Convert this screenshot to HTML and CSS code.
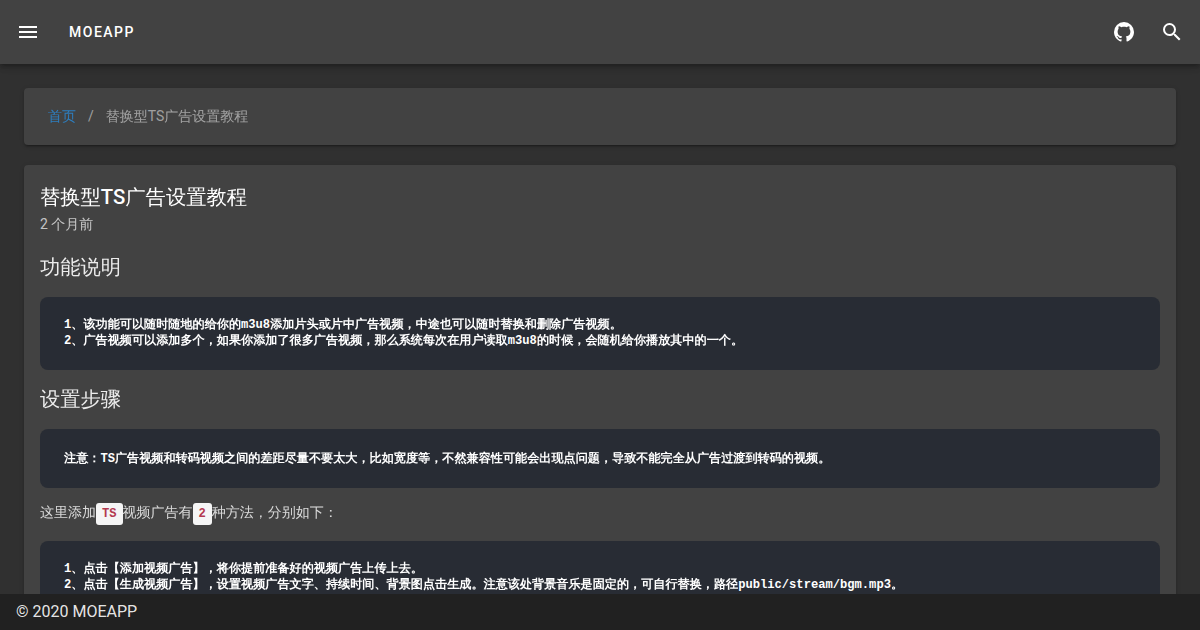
FILE: index.html
```html
<!DOCTYPE html>
<html lang="en">
  <head>
    <meta charset="utf-8" />
    <title>替换型TS广告设置教程 - MOEAPP</title>
    <link rel="stylesheet" href="styles.css">
  </head>

  <body>
    <div class="app">
      <header class="toolbar">
        <button class="icon-btn" aria-label="menu">
          <svg viewBox="0 0 24 24" width="24" height="24"><path d="M3 18h18v-2H3v2zm0-5h18v-2H3v2zm0-7v2h18V6H3z"/></svg>
        </button>
        <div class="toolbar-title">MOEAPP</div>
        <div class="spacer"></div>
        <button class="icon-btn" aria-label="github">
          <svg viewBox="0 0 24 24" width="24" height="24"><path d="M12 2A10 10 0 0 0 2 12c0 4.42 2.87 8.17 6.84 9.5.5.08.66-.23.66-.5v-1.69c-2.77.6-3.36-1.34-3.36-1.34-.46-1.16-1.11-1.47-1.11-1.47-.91-.62.07-.6.07-.6 1 .07 1.53 1.03 1.53 1.03.87 1.52 2.34 1.07 2.91.83.09-.65.35-1.09.63-1.34-2.22-.25-4.55-1.11-4.55-4.92 0-1.11.38-2 1.03-2.71-.1-.25-.45-1.29.1-2.64 0 0 .84-.27 2.75 1.02.79-.22 1.65-.33 2.5-.33.85 0 1.71.11 2.5.33 1.91-1.29 2.75-1.02 2.75-1.02.55 1.35.2 2.39.1 2.64.65.71 1.03 1.6 1.03 2.71 0 3.82-2.34 4.66-4.57 4.91.36.31.69.92.69 1.85V21c0 .27.16.59.67.5C19.14 20.16 22 16.42 22 12A10 10 0 0 0 12 2z"/></svg>
        </button>
        <button class="icon-btn" aria-label="search">
          <svg viewBox="0 0 24 24" width="24" height="24"><path d="M15.5 14h-.79l-.28-.27A6.471 6.471 0 0 0 16 9.5 6.5 6.5 0 1 0 9.5 16c1.61 0 3.09-.59 4.23-1.57l.27.28v.79l5 4.99L20.49 19l-4.99-5zm-6 0C7.01 14 5 11.99 5 9.5S7.01 5 9.5 5 14 7.01 14 9.5 11.99 14 9.5 14z"/></svg>
        </button>
      </header>

      <main class="content">
        <nav class="card crumbs">
          <a class="crumb-link" href="#">首页</a>
          <span class="crumb-sep">/</span>
          <span class="crumb-current">替换型TS广告设置教程</span>
        </nav>

        <article class="card post">
          <h1 class="post-title">替换型<strong>TS</strong>广告设置教程</h1>
          <div class="post-date">2 个月前</div>

          <h3 class="section-title">功能说明</h3>
          <pre class="code">1、该功能可以随时随地的给你的m3u8添加片头或片中广告视频，中途也可以随时替换和删除广告视频。
2、广告视频可以添加多个，如果你添加了很多广告视频，那么系统每次在用户读取m3u8的时候，会随机给你播放其中的一个。</pre>

          <h3 class="section-title">设置步骤</h3>
          <pre class="code code-single">注意：TS广告视频和转码视频之间的差距尽量不要太大，比如宽度等，不然兼容性可能会出现点问题，导致不能完全从广告过渡到转码的视频。</pre>

          <p class="para">这里添加<code class="tag">TS</code>视频广告有<code class="tag">2</code>种方法，分别如下：</p>

          <pre class="code">1、点击【添加视频广告】，将你提前准备好的视频广告上传上去。
2、点击【生成视频广告】，设置视频广告文字、持续时间、背景图点击生成。注意该处背景音乐是固定的，可自行替换，路径public/stream/bgm.mp3。</pre>
        </article>
      </main>

      <footer class="footer">© 2020 MOEAPP</footer>
    </div>
  </body>
</html>
```

FILE: styles.css
```css
html, body {
  margin: 0;
  padding: 0;
  height: 100%;
  overflow: hidden;
}

body {
  background: #303030;
  color: #fff;
  font-family: Roboto, "WenQuanYi Zen Hei", "Noto Sans CJK SC", sans-serif;
  font-size: 14px;
  line-height: 20px;
}

.app {
  position: relative;
  height: 100%;
  overflow: hidden;
}

/* top bar */
.toolbar {
  position: relative;
  display: flex;
  align-items: center;
  height: 64px;
  padding: 0 4px;
  background: #424242;
  box-shadow: 0 2px 4px -1px rgba(0, 0, 0, .2), 0 4px 5px 0 rgba(0, 0, 0, .14), 0 1px 10px 0 rgba(0, 0, 0, .12);
}

.icon-btn {
  width: 48px;
  height: 48px;
  display: flex;
  align-items: center;
  justify-content: center;
  padding: 0;
  border: 0;
  background: none;
  fill: #fff;
}

.toolbar-title {
  margin-left: 17px;
  font-size: 14px;
  font-weight: 500;
  letter-spacing: 1.5px;
}

.spacer {
  flex: 1;
}

/* page */
.content {
  padding: 24px;
}

.card {
  background: #424242;
  border-radius: 4px;
  box-shadow: 0 3px 1px -2px rgba(0, 0, 0, .2), 0 2px 2px 0 rgba(0, 0, 0, .14), 0 1px 5px 0 rgba(0, 0, 0, .12);
}

.crumbs {
  display: flex;
  align-items: center;
  box-sizing: border-box;
  height: 57px;
  padding: 0 24px 2px;
  margin-bottom: 20px;
}

.crumb-link {
  color: #2d7fc1;
  text-decoration: none;
}

.crumb-sep {
  padding: 0 12px;
  color: rgba(255, 255, 255, .5);
}

.crumb-current {
  color: rgba(255, 255, 255, .5);
}

.post {
  padding: 16px;
}

.post-title {
  margin: 0;
  font-size: 20.3px;
  font-weight: 400;
  line-height: 32px;
}

.post-title strong {
  font-weight: 500;
}

.post-date {
  margin-top: 1px;
  padding-bottom: 4px;
  color: rgba(255, 255, 255, .7);
}

.section-title {
  margin: 15px 0 16px;
  font-size: 20.3px;
  font-weight: 400;
  line-height: 28px;
  color: rgba(255, 255, 255, .9);
}

.code {
  margin: 0 0 15px;
  padding: 20px 24px 21px;
  background: #282c34;
  border-radius: 8px;
  color: #fff;
  font-family: "Liberation Mono", "WenQuanYi Zen Hei", "Noto Sans CJK SC", monospace;
  font-size: 12.13px;
  font-weight: 900;
  line-height: 16px;
  white-space: pre-wrap;
}

.code-single {
  margin-bottom: 13px;
  padding-top: 21px;
  padding-bottom: 19px;
  line-height: 19px;
}

.para {
  margin: 0 0 16px;
  color: rgba(255, 255, 255, .8);
  line-height: 22px;
}

.tag {
  display: inline-block;
  padding: 0 6px;
  background: #f5f5f5;
  border-radius: 3px;
  color: #b3394f;
  font-family: "Liberation Mono", monospace;
  font-size: 12.13px;
  font-weight: 900;
  line-height: 22px;
}

/* footer sits over the page */
.footer {
  position: absolute;
  left: 0;
  right: 0;
  bottom: 0;
  height: 36px;
  padding: 0 16px;
  background: #212121;
  font-size: 16px;
  line-height: 36px;
  color: rgba(255, 255, 255, .9);
}
```
